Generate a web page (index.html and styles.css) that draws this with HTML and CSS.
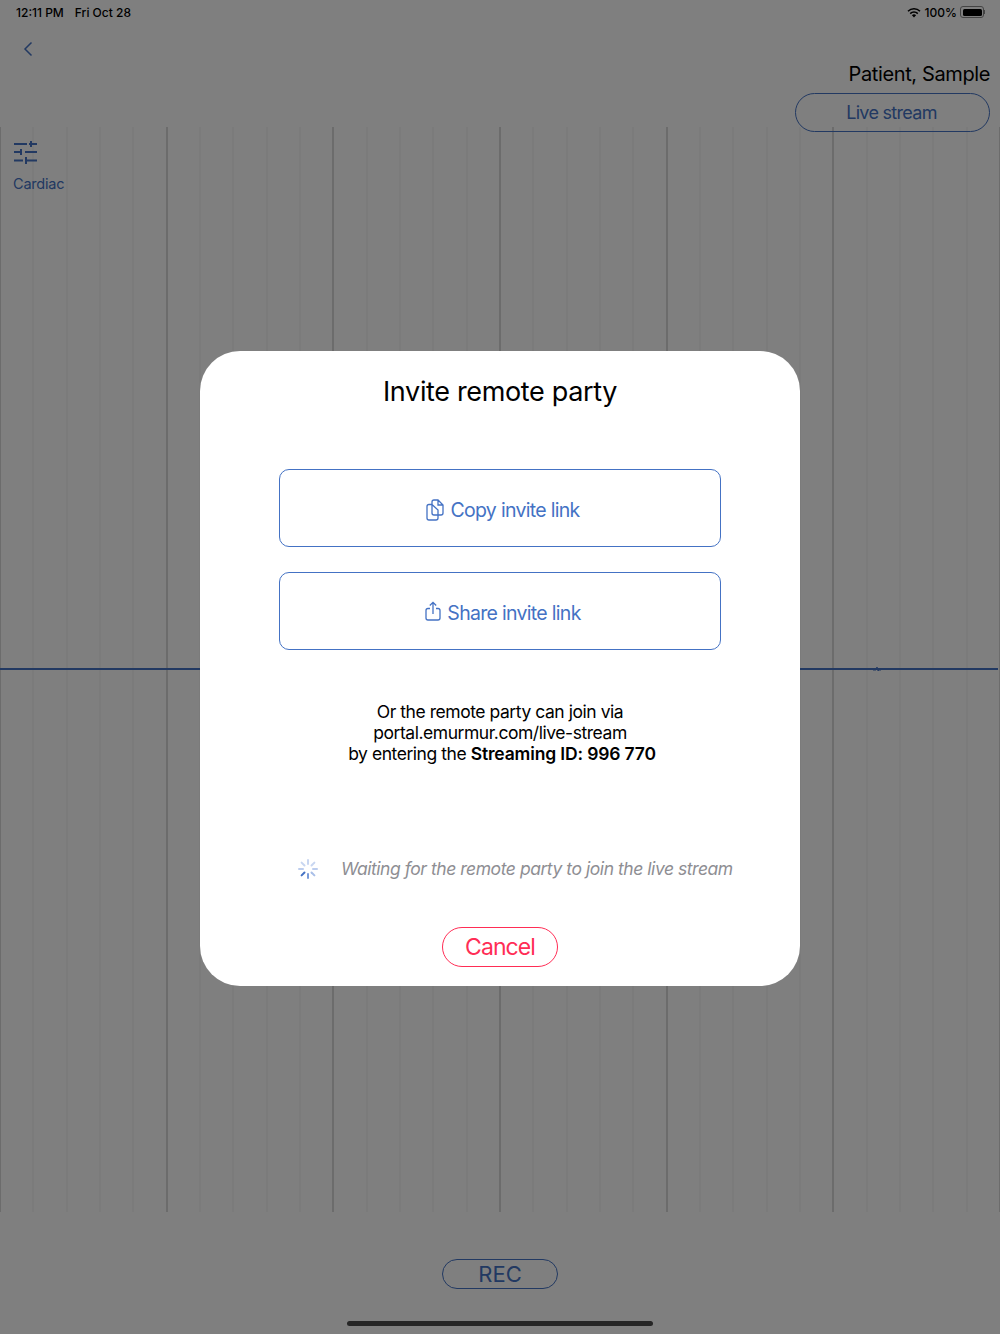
FILE: index.html
```html
<!DOCTYPE html>
<html lang="en">
<head>
  <meta charset="UTF-8">
  <meta name="viewport" content="width=device-width, initial-scale=1.0">
  <title>Invite remote party</title>
  <link rel="stylesheet" href="styles.css">
</head>
<body>
  <div class="page">
    <div class="status">
      <div class="status-left">
        <span>12:11 PM</span>
        <span>Fri Oct 28</span>
      </div>
      <div class="status-right">
        <svg class="wifi" width="14" height="11" viewBox="0 0 14 11">
          <path d="M7 10.600 4.900 8.300a3 3 0 0 1 4.200 0z" fill="#000"/>
          <path d="M3.200 6.600a5.400 5.400 0 0 1 7.600 0" fill="none" stroke="#000" stroke-width="1.600"/>
          <path d="M1 4.200a8.500 8.500 0 0 1 12 0" fill="none" stroke="#000" stroke-width="1.600"/>
        </svg>
        <span>100%</span>
        <div class="battery"><div class="battery-fill"></div></div>
        <div class="battery-tip"></div>
      </div>
    </div>

    <div class="nav">
      <svg class="back" width="10" height="16" viewBox="0 0 10 16">
        <path d="M8.500 1.500 2 8l6.500 6.500" fill="none" stroke="#4472c4" stroke-width="1.500"/>
      </svg>
      <div class="patient">
        <div class="patient-name">Patient, Sample</div>
        <button class="live-btn" type="button">Live stream</button>
      </div>
    </div>

    <div class="chart">
      <div class="trace"></div>
      <svg class="blip" width="8" height="6" viewBox="0 0 8 6">
        <path d="M0 4h3l1-3 1 4 1-1h2" fill="none" stroke="#4472c4" stroke-width="1"/>
      </svg>
      <div class="filter">
        <svg width="26" height="27" viewBox="0 0 26 27">
          <path d="M1 5h13M16 5h8M18 2v6M1 13h7M12 13h12M8 10v6M1 21.500h9M12 21.500h12M13 18v7" fill="none" stroke="#4472c4" stroke-width="2"/>
        </svg>
        <div class="filter-label">Cardiac</div>
      </div>
    </div>

    <div class="footer">
      <button class="rec-btn" type="button">REC</button>
      <div class="home-bar"></div>
    </div>
  </div>

  <div class="scrim">
    <div class="modal">
      <h1>Invite remote party</h1>

      <div class="actions">
        <button class="action" type="button">
          <svg width="18" height="22" viewBox="0 0 18 22">
            <path d="M6 5.500H3a2 2 0 0 0-2 2V19a2 2 0 0 0 2 2h7a2 2 0 0 0 2-2v-3" fill="none" stroke="#4472c4" stroke-width="1.300"/>
            <path d="M6 3a2 2 0 0 1 2-2h4l5 5v8a2 2 0 0 1-2 2H8a2 2 0 0 1-2-2zM12 1v5h5M6 5.500l6 5.500v5" fill="none" stroke="#4472c4" stroke-width="1.300"/>
          </svg>
          <span>Copy invite link</span>
        </button>
        <button class="action" type="button">
          <svg class="share-icon" width="16" height="20" viewBox="0 0 16 20">
            <path d="M5 7.500H3a2 2 0 0 0-2 2V17a2 2 0 0 0 2 2h10a2 2 0 0 0 2-2V9.500a2 2 0 0 0-2-2h-2M8 13V1.500M4.800 4.500 8 1.300l3.200 3.200" fill="none" stroke="#4472c4" stroke-width="1.300"/>
          </svg>
          <span>Share invite link</span>
        </button>
      </div>

      <p class="join">
        Or the remote party can join via<br>
        portal.emurmur.com/live-stream<br>
        <span class="join-id">by entering the <b>Streaming ID: 996 770</b></span>
      </p>

      <div class="waiting">
        <svg class="spinner" width="20" height="20" viewBox="0 0 20 20" stroke-width="2" stroke-linecap="round">
          <path d="M10 1v4" stroke="#c8d6f1"/>
          <path d="M16.400 3.600 13.500 6.500" stroke="#c8d6f1"/>
          <path d="M19 10h-4" stroke="#bccdee"/>
          <path d="M16.400 16.400 13.500 13.500" stroke="#a9bfe8"/>
          <path d="M10 19v-4" stroke="#7a9bd9"/>
          <path d="M3.600 16.400 6.500 13.500" stroke="#4472c4"/>
          <path d="M1 10h4" stroke="#bccdee"/>
          <path d="M3.600 3.600 6.500 6.500" stroke="#c8d6f1"/>
        </svg>
        <span>Waiting for the remote party to join the live stream</span>
      </div>

      <button class="cancel" type="button">Cancel</button>
    </div>
  </div>
</body>
</html>
```

FILE: styles.css
```css
* {
  box-sizing: border-box;
}
body {
  margin: 0;
  font-family: Inter, "Liberation Sans", sans-serif;
  background: #fff;
  color: #000;
}
button {
  font-family: inherit;
  background: none;
  cursor: pointer;
}
.page {
  width: 1000px;
  height: 1334px;
  display: flex;
  flex-direction: column;
  overflow: hidden;
}

/* status bar */
.status {
  height: 24px;
  padding: 0 15px 0 16px;
  display: flex;
  justify-content: space-between;
  align-items: center;
  font-size: 12px;
  font-weight: 500;
}
.status-left {
  display: flex;
  gap: 11px;
}
.status-right {
  display: flex;
  align-items: center;
}
.wifi {
  margin-right: 4px;
}
.battery {
  width: 24px;
  height: 12px;
  margin-left: 3px;
  padding: 1.500px;
  border: 1px solid #888;
  border-radius: 3px;
}
.battery-fill {
  height: 100%;
  background: #000;
  border-radius: 1.500px;
}
.battery-tip {
  width: 1px;
  height: 4px;
  background: #888;
}

/* nav */
.nav {
  flex: none;
  position: relative;
  z-index: 1;
  height: 103px;
  padding: 15px 10px 0 23px;
  display: flex;
  justify-content: space-between;
}
.back {
  margin-top: 2px;
}
.patient {
  display: flex;
  flex-direction: column;
  align-items: flex-end;
}
.patient-name {
  margin-top: 21px;
  font-size: 20px;
  line-height: 28px;
  letter-spacing: -0.38px;
}
.live-btn {
  flex: none;
  width: 195px;
  height: 39px;
  margin-top: 5px;
  border: 1px solid #4472c4;
  border-radius: 20px;
  color: #4472c4;
  font-size: 18px;
  letter-spacing: -0.7px;
  padding: 0 2px 0 0;
}

/* chart */
.chart {
  flex: none;
  position: relative;
  height: 1085px;
  padding: 12px 0 0 13px;
  background-image:
    repeating-linear-gradient(to right, #d8d8d8 0, #d8d8d8 2px, transparent 2px, transparent 166.670px),
    repeating-linear-gradient(to right, #f7f7f7 0, #f7f7f7 2px, transparent 2px, transparent 33.330px);
  background-position: -1px 0, -1px 0;
}
.trace {
  position: absolute;
  left: 0;
  top: 541px;
  width: 998px;
  height: 2px;
  background: #4472c4;
}
.blip {
  position: absolute;
  left: 873px;
  top: 539px;
}
.filter svg {
  display: block;
}
.filter-label {
  margin-top: 9px;
  font-size: 14.500px;
  letter-spacing: -0.2px;
  color: #4472c4;
}

/* footer */
.footer {
  flex: 1;
  display: flex;
  flex-direction: column;
  align-items: center;
}
.rec-btn {
  flex: none;
  width: 116px;
  height: 30px;
  margin-top: 47px;
  border: 1px solid #4472c4;
  border-radius: 15px;
  color: #4472c4;
  font-size: 22px;
  padding: 0;
}
.home-bar {
  flex: none;
  width: 306px;
  height: 5px;
  margin-top: 32px;
  background: #4d4d4d;
  border-radius: 3px;
}

/* dialog */
.scrim {
  position: absolute;
  z-index: 2;
  left: 0;
  top: 0;
  width: 1000px;
  height: 1334px;
  padding-top: 351px;
  background: rgba(0, 0, 0, 0.5);
  display: flex;
  justify-content: center;
  align-items: flex-start;
}
.modal {
  width: 600px;
  height: 635px;
  padding-top: 23px;
  background: #fff;
  border-radius: 40px;
  display: flex;
  flex-direction: column;
  align-items: center;
}
.modal h1 {
  margin: 0;
  font-size: 27px;
  line-height: 36px;
  font-weight: 400;
  letter-spacing: -0.35px;
}
.actions {
  width: 442px;
  margin-top: 59px;
  display: flex;
  flex-direction: column;
  gap: 25px;
}
.action {
  height: 78px;
  padding: 4px 0 0 6px;
  border: 1px solid #4472c4;
  border-radius: 10px;
  color: #4472c4;
  font-size: 19.500px;
  letter-spacing: -0.7px;
  display: flex;
  justify-content: center;
  align-items: center;
  gap: 6px;
}
.share-icon {
  margin-top: -4px;
}
.join {
  margin: 51px 0 0;
  font-size: 17.500px;
  line-height: 21px;
  letter-spacing: -0.45px;
  text-align: center;
}
.join b {
  font-weight: 600;
  letter-spacing: -0.15px;
}
.join-id {
  padding-left: 4px;
}
.waiting {
  width: 100%;
  margin-top: 94px;
  padding-left: 98px;
  display: flex;
  align-items: center;
  gap: 23px;
  white-space: nowrap;
  color: #8e8e93;
  font-size: 17.500px;
  letter-spacing: -0.45px;
  font-style: italic;
}
.cancel {
  flex: none;
  width: 116px;
  height: 40px;
  margin-top: 48px;
  border: 1px solid #ff2d55;
  border-radius: 20px;
  color: #ff2d55;
  font-size: 23px;
  letter-spacing: -0.9px;
  padding: 0;
}
```
